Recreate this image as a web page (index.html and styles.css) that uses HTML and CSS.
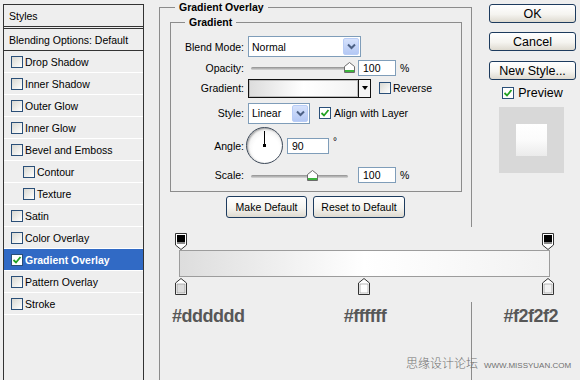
FILE: index.html
```html
<!DOCTYPE html>
<html>
<head>
<meta charset="utf-8">
<title>Layer Style</title>
<link rel="stylesheet" href="styles.css">
</head>
<body>
<div class="dialog">
  <div class="styles-panel">
    <div class="sp-head">Styles</div>
    <div class="sp-row sp-blend">Blending Options: Default</div>
    <div class="sp-row"><span class="cb"></span>Drop Shadow</div>
    <div class="sp-row"><span class="cb"></span>Inner Shadow</div>
    <div class="sp-row"><span class="cb"></span>Outer Glow</div>
    <div class="sp-row"><span class="cb"></span>Inner Glow</div>
    <div class="sp-row"><span class="cb"></span>Bevel and Emboss</div>
    <div class="sp-row sub"><span class="cb"></span>Contour</div>
    <div class="sp-row sub"><span class="cb"></span>Texture</div>
    <div class="sp-row"><span class="cb"></span>Satin</div>
    <div class="sp-row"><span class="cb"></span>Color Overlay</div>
    <div class="sp-row selected"><span class="cb on"><svg width="10" height="10" viewBox="0 0 10 10"><path d="M1.5 5 L4 7.5 L8.5 2" stroke="#21a121" stroke-width="1.8" fill="none"/></svg></span>Gradient Overlay</div>
    <div class="sp-row"><span class="cb"></span>Pattern Overlay</div>
    <div class="sp-row"><span class="cb"></span>Stroke</div>
  </div>

  <div class="main">
    <fieldset class="group outer">
      <legend>Gradient Overlay</legend>
      <fieldset class="group inner">
        <legend>Gradient</legend>
        <div class="form">
          <label>Blend Mode:</label>
          <div class="ctl">
            <div class="select w-blend"><span class="txt">Normal</span><span class="drop"><svg width="9" height="7" viewBox="0 0 9 7"><path d="M1 1.5 L4.5 5 L8 1.5" stroke="#4d6185" stroke-width="2" fill="none"/></svg></span></div>
          </div>

          <label>Opacity:</label>
          <div class="ctl">
            <div class="slider"><div class="track"></div><svg class="thumb" style="left:96px" width="11" height="11" viewBox="0 0 11 11"><path d="M5.5 0.5 L10.5 4.5 V10.5 H0.5 V4.5 Z" fill="#fff" stroke="#6b6b6b"/><rect x="1" y="8" width="9" height="2" fill="#3cb43c"/></svg></div>
            <div class="num">100</div><span class="unit">%</span>
          </div>

          <label>Gradient:</label>
          <div class="ctl">
            <div class="gbox"><div class="gfill"></div><div class="garrow"><span class="tri"></span></div></div>
            <span class="cb gap-rev"></span><span>Reverse</span>
          </div>

          <label>Style:</label>
          <div class="ctl">
            <div class="select w-style"><span class="txt">Linear</span><span class="drop"><svg width="9" height="7" viewBox="0 0 9 7"><path d="M1 1.5 L4.5 5 L8 1.5" stroke="#4d6185" stroke-width="2" fill="none"/></svg></span></div>
            <span class="cb on gap-align"><svg width="10" height="10" viewBox="0 0 10 10"><path d="M1.5 5 L4 7.5 L8.5 2" stroke="#21a121" stroke-width="1.8" fill="none"/></svg></span><span>Align with Layer</span>
          </div>

          <label>Angle:</label>
          <div class="ctl">
            <div class="dial"><span class="hand"></span><span class="hub"></span></div>
            <div class="num w-angle">90</div><span class="deg">°</span>
          </div>

          <label>Scale:</label>
          <div class="ctl">
            <div class="slider"><div class="track"></div><svg class="thumb" style="left:59px" width="11" height="11" viewBox="0 0 11 11"><path d="M5.5 0.5 L10.5 4.5 V10.5 H0.5 V4.5 Z" fill="#fff" stroke="#6b6b6b"/><rect x="1" y="8" width="9" height="2" fill="#3cb43c"/></svg></div>
            <div class="num">100</div><span class="unit">%</span>
          </div>
        </div>
      </fieldset>

      <div class="btns">
        <div class="btn w-make">Make Default</div>
        <div class="btn w-reset">Reset to Default</div>
      </div>

      <div class="editor">
        <svg class="stop" style="left:10px;top:6px" width="12" height="17" viewBox="0 0 12 17"><path d="M0.5 0.5 H11.5 V12 L6 16.5 L0.5 12 Z" fill="#fff" stroke="#333"/><rect x="2" y="2" width="8" height="7" fill="#000"/><rect x="2" y="9" width="8" height="2" fill="#8a8a8a"/></svg>
        <svg class="stop" style="left:377px;top:6px" width="12" height="17" viewBox="0 0 12 17"><path d="M0.5 0.5 H11.5 V12 L6 16.5 L0.5 12 Z" fill="#fff" stroke="#333"/><rect x="2" y="2" width="8" height="7" fill="#000"/><rect x="2" y="9" width="8" height="2" fill="#8a8a8a"/></svg>
        <div class="bar"></div>
        <svg class="stop" style="left:10px;top:51px" width="12" height="17" viewBox="0 0 12 17"><path d="M6 0.5 L11.5 5 V16.5 H0.5 V5 Z" fill="#fff" stroke="#333"/><rect x="2" y="6" width="8" height="9" fill="#dddddd" stroke="#777" stroke-width="0.5"/></svg>
        <svg class="stop" style="left:193px;top:51px" width="12" height="17" viewBox="0 0 12 17"><path d="M6 0.5 L11.5 5 V16.5 H0.5 V5 Z" fill="#fff" stroke="#333"/><rect x="2" y="6" width="8" height="9" fill="#ffffff" stroke="#777" stroke-width="0.5"/></svg>
        <svg class="stop" style="left:377px;top:51px" width="12" height="17" viewBox="0 0 12 17"><path d="M6 0.5 L11.5 5 V16.5 H0.5 V5 Z" fill="#fff" stroke="#333"/><rect x="2" y="6" width="8" height="9" fill="#f2f2f2" stroke="#777" stroke-width="0.5"/></svg>
      </div>

      <div class="hexes">
        <span class="hex-l">#dddddd</span>
        <span class="hex-c">#ffffff</span>
        <span class="hex-r">#f2f2f2</span>
      </div>
    </fieldset>
  </div>

  <div class="side">
    <div class="btn sbtn">OK</div>
    <div class="btn sbtn m9">Cancel</div>
    <div class="btn sbtn m10">New Style...</div>
    <div class="prev"><span class="cb on"><svg width="10" height="10" viewBox="0 0 10 10"><path d="M1.5 5 L4 7.5 L8.5 2" stroke="#21a121" stroke-width="1.8" fill="none"/></svg></span><span>Preview</span></div>
    <div class="pbox"><div class="psq"></div></div>
  </div>
</div>

<div class="wm"><span class="wm-cn">思缘设计论坛</span><span class="wm-en">WWW.MISSYUAN.COM</span></div>
</body>
</html>
```

FILE: styles.css
```css
* { box-sizing: border-box; }
html, body { margin: 0; padding: 0; }
body {
  width: 580px;
  height: 380px;
  overflow: hidden;
  position: relative;
  background: #eeeeee;
  font-family: "Liberation Sans", Arial, sans-serif;
  font-size: 10.5px;
  color: #000;
}
.dialog { display: flex; align-items: flex-start; height: 380px; }

/* ---------- left styles list ---------- */
.styles-panel {
  flex: none;
  width: 141px;
  height: 376px;
  margin: 4px 0 0 3px;
  border: 1px solid #333;
  border-bottom: 0;
}
.sp-head {
  height: 24px;
  border-bottom: 3px double #333;
  padding-left: 5px;
  display: flex;
  align-items: center;
}
.sp-row {
  height: 22px;
  border-bottom: 1px solid #fff;
  display: flex;
  align-items: center;
  padding-left: 7px;
  white-space: nowrap;
}
.sp-row.sp-blend { padding-left: 5px; border-bottom-color: #333; }
.sp-row.sub { padding-left: 19px; }
.sp-row.selected { background: #316ac5; color: #fff; font-weight: bold; }

.cb {
  flex: none;
  width: 12px;
  height: 12px;
  margin-right: 2px;
  border: 1px solid #2a4f78;
  background: linear-gradient(135deg, #d8d8d2, #ffffff);
  display: flex;
  align-items: center;
  justify-content: center;
}
.cb.on { background: #fff; }

/* ---------- main column ---------- */
.main { flex: none; width: 313px; height: 380px; margin-left: 15px; }
.group {
  margin: 0;
  padding: 0;
  min-width: 0;
  border: 1px solid #8c8c8c;
}
.group > legend {
  padding: 0 4px;
  font-weight: bold;
  line-height: 14px;
}
.outer { height: 380px; border-bottom: 0; }
.outer > legend { margin-left: 15px; }
.inner { margin: 1px 9px 0 10px; }
.inner > legend { margin-left: 14px; }

.form {
  display: grid;
  grid-template-columns: 73px auto;
  grid-template-rows: 23px 19px 22px 28px 37px 22px;
  column-gap: 4px;
  padding: 6px 0 5px;
}
.form label { text-align: right; align-self: center; }
.ctl { display: flex; align-items: center; white-space: nowrap; }

.select {
  height: 21px;
  border: 1px solid #7f9db9;
  background: #fff;
  display: flex;
  align-items: center;
  padding-left: 3px;
}
.select .txt { flex: 1; }
.select .drop {
  width: 16px;
  height: 17px;
  margin-right: 1px;
  border: 1px solid #b9cdf6;
  border-radius: 2px;
  background: linear-gradient(#d6e2fc, #b4c8f4);
  display: flex;
  align-items: center;
  justify-content: center;
}
.w-blend { width: 113px; }
.w-style { width: 62px; }

.slider {
  position: relative;
  width: 106px;
  height: 11px;
  padding: 5px 0 0 3px;
}
.track {
  width: 97px;
  height: 3px;
  border-radius: 2px;
  background: linear-gradient(#8f8f8f, #d8d8d8);
}
.thumb { position: absolute; top: 0; }

.num {
  width: 38px;
  height: 16px;
  margin-left: 4px;
  border: 1px solid #7f9db9;
  background: #fff;
  padding-left: 4px;
  display: flex;
  align-items: center;
}
.unit { margin-left: 4px; }
.w-angle { width: 42px; }
.deg { margin-left: 4px; align-self: flex-start; margin-top: 9px; font-size: 10px; }

.gbox {
  width: 123px;
  height: 19px;
  border: 1px solid #111;
  display: flex;
}
.gfill {
  flex: 1;
  border: 1px solid #bdbdbd;
  background: linear-gradient(90deg, #dddddd, #ffffff 50%, #f2f2f2);
}
.garrow {
  width: 12px;
  border-left: 1px solid #111;
  background: #f4f4f4;
  display: flex;
  align-items: center;
  justify-content: center;
}
.tri {
  width: 0;
  height: 0;
  border-left: 3px solid transparent;
  border-right: 3px solid transparent;
  border-top: 4px solid #000;
}
.gap-rev { margin-left: 8px; }
.gap-align { margin-left: 9px; margin-right: 3px; }

.dial {
  position: relative;
  flex: none;
  width: 37px;
  height: 37px;
  margin-left: -2px;
  border-radius: 50%;
  border: 1px solid #3e4a5a;
  background: radial-gradient(circle at 55% 60%, #ffffff 45%, #e2e2e2 100%);
  box-shadow: inset 1px 1px 2px rgba(0,0,0,0.35);
}
.hand {
  position: absolute;
  left: 17px;
  top: 3px;
  width: 1px;
  height: 15px;
  background: #000;
}
.hub {
  position: absolute;
  left: 16px;
  top: 16px;
  width: 3px;
  height: 3px;
  background: #000;
}

/* ---------- buttons ---------- */
.btn {
  height: 22px;
  border: 1px solid #1d3b5e;
  border-radius: 3px;
  background: linear-gradient(#ffffff, #f5f4f0 55%, #dedad0);
  display: flex;
  align-items: center;
  justify-content: center;
  white-space: nowrap;
}
.btns { display: flex; gap: 6px; margin: 4px 0 0 66px; }
.w-make { width: 81px; }
.w-reset { width: 92px; }

/* ---------- gradient editor ---------- */
.editor {
  position: relative;
  width: 415px;
  height: 75px;
  margin: 9px 0 0 5px;
  padding: 23px 0 0 14px;
  background: #eeeeee;
}
.bar {
  width: 371px;
  height: 27px;
  border: 1px solid #9c9c9c;
  background: linear-gradient(90deg, #dddddd, #ffffff 50%, #f2f2f2);
}
.stop { position: absolute; }

.hexes {
  display: grid;
  grid-template-columns: repeat(3, 1fr);
  width: 386px;
  margin: 4px 0 0 12px;
  font-size: 18px;
  line-height: 20px;
  font-weight: bold;
  letter-spacing: -0.5px;
  color: #575757;
}
.hex-c { text-align: center; }
.hex-r { text-align: right; }

/* ---------- right side ---------- */
.side {
  flex: none;
  width: 87px;
  margin-left: 17px;
  padding-top: 4px;
  display: flex;
  flex-direction: column;
}
.sbtn { height: 19px; font-size: 12.5px; }
.m9 { margin-top: 9px; }
.m10 { margin-top: 10px; }
.prev {
  height: 16px;
  margin-top: 5px;
  display: flex;
  align-items: center;
  justify-content: center;
  font-size: 12.5px;
}
.prev .cb { margin-right: 4px; }
.pbox {
  width: 65px;
  height: 66px;
  margin: 6px 0 0 10px;
  background: #d8d8d8;
  display: flex;
  align-items: center;
  justify-content: center;
}
.psq {
  width: 31px;
  height: 32px;
  background: linear-gradient(#ffffff, #fbfbfb 50%, #ebebeb);
}

/* ---------- watermark ---------- */
.wm {
  position: absolute;
  left: 406px;
  top: 354px;
  display: flex;
  align-items: baseline;
  gap: 6px;
  color: #707070;
}
.wm-cn { font-family: "Noto Sans CJK SC", sans-serif; font-size: 12px; font-weight: 300; }
.wm-en { font-size: 8px; }
```
